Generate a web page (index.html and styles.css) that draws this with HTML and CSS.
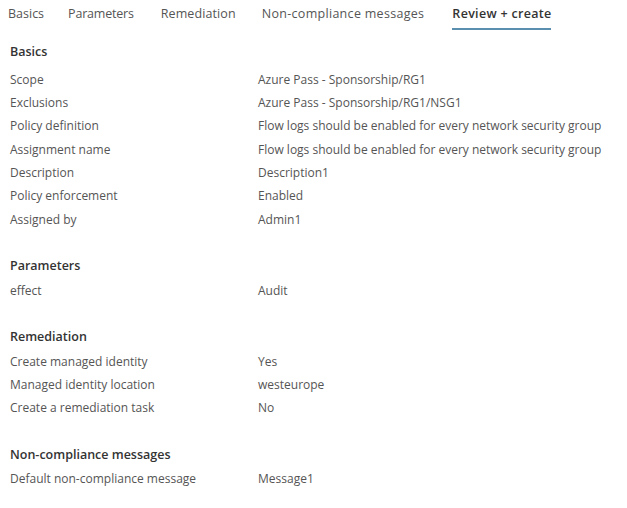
FILE: index.html
```html
<!DOCTYPE html>
<html>
<head>
<meta charset="utf-8">
<link rel="stylesheet" href="styles.css">
</head>
<body>
<nav class="tabs">
  <span class="tab">Basics</span>
  <span class="tab tab-params">Parameters</span>
  <span class="tab tab-remed">Remediation</span>
  <span class="tab tab-noncomp">Non-compliance messages</span>
  <span class="tab active">Review + create</span>
</nav>
<main class="content">
  <section class="section first">
    <h2 class="heading">Basics</h2>
    <div class="row"><span class="label">Scope</span><span class="value">Azure Pass - Sponsorship/RG1</span></div>
    <div class="row"><span class="label">Exclusions</span><span class="value">Azure Pass - Sponsorship/RG1/NSG1</span></div>
    <div class="row"><span class="label">Policy definition</span><span class="value">Flow logs should be enabled for every network security group</span></div>
    <div class="row"><span class="label">Assignment name</span><span class="value">Flow logs should be enabled for every network security group</span></div>
    <div class="row"><span class="label">Description</span><span class="value">Description1</span></div>
    <div class="row"><span class="label">Policy enforcement</span><span class="value">Enabled</span></div>
    <div class="row"><span class="label">Assigned by</span><span class="value">Admin1</span></div>
  </section>
  <section class="section">
    <h2 class="heading">Parameters</h2>
    <div class="row"><span class="label">effect</span><span class="value">Audit</span></div>
  </section>
  <section class="section">
    <h2 class="heading">Remediation</h2>
    <div class="row"><span class="label">Create managed identity</span><span class="value">Yes</span></div>
    <div class="row"><span class="label">Managed identity location</span><span class="value">westeurope</span></div>
    <div class="row"><span class="label">Create a remediation task</span><span class="value">No</span></div>
  </section>
  <section class="section">
    <h2 class="heading">Non-compliance messages</h2>
    <div class="row"><span class="label">Default non-compliance message</span><span class="value">Message1</span></div>
  </section>
</main>
</body>
</html>
```
FILE: styles.css
```css
* { box-sizing: border-box; }
body {
  margin: 0;
  background: #fff;
  font-family: "Open Sans", "Noto Sans", sans-serif;
  font-size: 12px;
  color: #555;
}
.tabs {
  display: flex;
  gap: 26px;
  padding: 0 0 0 8px;
  height: 31px;
}
.tab {
  display: block;
  height: 31px;
  padding-top: 5px;
  line-height: 18px;
  font-size: 12.5px;
  color: #555;
}
.tab-params {
  margin-left: -2px;
  letter-spacing: -0.2px;
}
.tab-remed { margin-left: 1px; letter-spacing: 0.1px; }
.tab-noncomp { letter-spacing: 0.3px; }
.tab.active {
  margin-left: 2px;
  color: #333;
  font-weight: 600;
  letter-spacing: 0.3px;
  position: relative;
}
.tab.active::after {
  content: "";
  position: absolute;
  left: 0;
  right: 0;
  top: 28px;
  height: 2px;
  background: #5a8fb0;
}
.content {
  padding: 8px 10px 0 10px;
}
.section { margin-bottom: 22px; }
.heading {
  margin: 0;
  height: 25.67px;
  line-height: 25.67px;
  font-size: 12.5px;
  font-weight: 600;
  color: #333;
}
.section.first .heading {
  height: 26.67px;
  line-height: 26.67px;
  margin-bottom: 2px;
}
.row {
  display: grid;
  grid-template-columns: 248px 1fr;
  height: 23.33px;
  line-height: 23.33px;
  white-space: nowrap;
}
.label, .value { color: #555; }
```
